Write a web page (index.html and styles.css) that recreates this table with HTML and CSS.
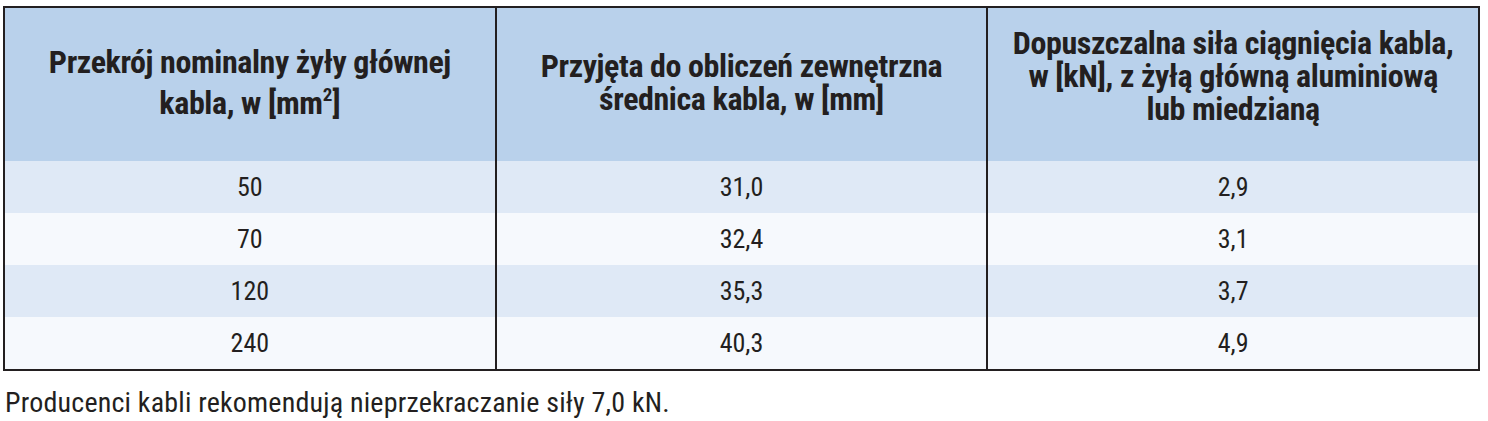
FILE: index.html
```html
<!DOCTYPE html>
<html lang="pl">
<head>
<meta charset="utf-8">
<link rel="stylesheet" href="styles.css">
</head>
<body>
<div class="page">
  <table class="cable">
    <thead>
      <tr>
        <th>Przekrój nominalny żyły głównej<br>kabla, w [mm<sup>2</sup>]</th>
        <th>Przyjęta do obliczeń zewnętrzna<br>średnica kabla, w [mm]</th>
        <th class="tall">Dopuszczalna siła ciągnięcia kabla,<br>w [kN], z żyłą główną aluminiową<br>lub miedzianą</th>
      </tr>
    </thead>
    <tbody>
      <tr><td>50</td><td>31,0</td><td>2,9</td></tr>
      <tr><td>70</td><td>32,4</td><td>3,1</td></tr>
      <tr><td>120</td><td>35,3</td><td>3,7</td></tr>
      <tr><td>240</td><td>40,3</td><td>4,9</td></tr>
    </tbody>
  </table>
  <p class="note">Producenci kabli rekomendują nieprzekraczanie siły 7,0 kN.</p>
</div>
</body>
</html>
```

FILE: styles.css
```css
html, body {
  margin: 0;
  padding: 0;
  background: #ffffff;
}

.page {
  padding: 6px 0 0 3px;
  font-family: "Roboto", "Open Sans", sans-serif;
  font-stretch: 75%;
  color: #231f20;
}

.cable {
  width: 1477px;
  border-collapse: collapse;
  table-layout: fixed;
  border: 2px solid #231f20;
}

.cable th,
.cable td {
  text-align: center;
  padding: 0;
  border-left: 2px solid #231f20;
  white-space: nowrap;
}

.cable th:first-child,
.cable td:first-child {
  border-left: none;
}

.cable th {
  height: 149px;
  padding-bottom: 4px;
  background: #b9d1eb;
  font-size: 32px;
  font-weight: bold;
  line-height: 33px;
  letter-spacing: -0.4px;
}

.cable th.tall {
  height: 137px;
  padding-bottom: 16px;
}

.cable th sup {
  font-size: 19px;
  line-height: 31px;
  vertical-align: 13px;
  letter-spacing: 0;
}

.cable td {
  height: 52px;
  font-size: 26px;
  line-height: 30px;
}

.cable tbody tr:nth-child(odd) td {
  background: #dfe9f6;
}

.cable tbody tr:nth-child(even) td {
  background: #f6f9fd;
}

.note {
  margin: 16px 0 0 2px;
  font-size: 28px;
  line-height: 32px;
  letter-spacing: 0.2px;
}
```
